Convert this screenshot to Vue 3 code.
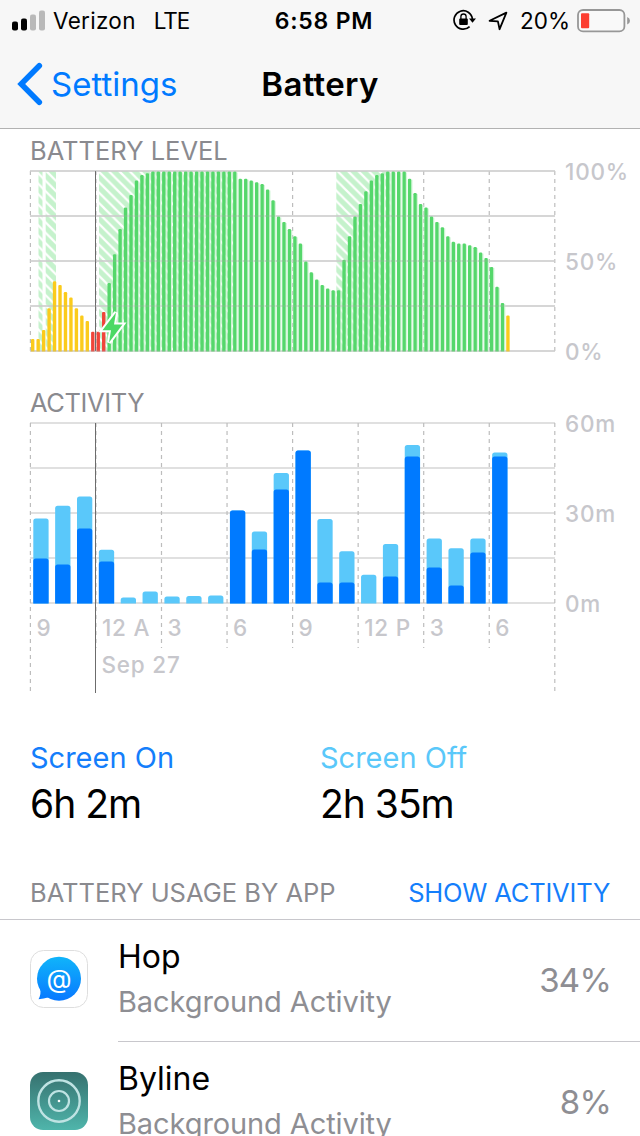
<script setup>
// Battery charge per 15 minutes, in percent
const levels = [
  7, 7, 12, 24, 39, 37, 33, 30, 24, 20, 17, 11, 11, 22, 38, 54, 68, 80, 87, 95, 98, 99,
  100, 100, 100, 100, 100, 100, 100, 100, 100, 100, 100, 100, 100, 100, 100, 100,
  96, 96, 95, 94, 93, 90, 84, 75, 72, 68, 64, 60, 50, 44, 40, 37, 35, 34, 34,
  51, 64, 75, 82, 89, 95, 98, 99, 100, 100, 100, 100, 96, 88, 82, 80, 75, 72, 69,
  64, 61, 60, 60, 59, 58, 55, 52, 47, 36, 27, 20,
]

// Minutes per hour: [screen on, screen on + off]
const activity = [
  [15, 28.3], [13, 32.6], [25, 35.7], [14, 17.9], [0, 2], [0, 4], [0, 2.3], [0, 2.5],
  [0, 2.7], [31, 31], [18, 24], [38, 43.5], [51, 51], [7, 28.2], [7, 17.4], [0, 9.6],
  [9, 19.8], [49, 52.8], [12, 21.7], [6, 18.4], [17, 21.7], [49, 50.3],
]

const LEFT = 30.4
const HOUR = 21.85
const QUARTER = HOUR / 4

function levelColor(i) {
  if (i >= 11 && i <= 13) return '#f0443a'
  if (i < 11 || i === 87) return '#fbcb1b'
  return '#55d76b'
}

const levelBars = levels.map((value, i) => ({
  x: LEFT + 0.6 + i * QUARTER,
  y: 351.5 - value * 1.8,
  h: value * 1.8,
  color: levelColor(i),
  wash: i > 13 && i < 87,
}))

// Periods in which the phone was plugged in
const charging = [
  { x: 38.5, w: 4 },
  { x: 45.7, w: 10.3 },
  { x: 99, w: 134.5 },
  { x: 336.3, w: 54.5 },
]

const gridRows = [0, 45, 90, 135, 180]
const hours = [
  { n: 0, label: '9' },
  { n: 3, label: '12 A' },
  { n: 6, label: '3' },
  { n: 9, label: '6' },
  { n: 12, label: '9' },
  { n: 15, label: '12 P' },
  { n: 18, label: '3' },
  { n: 21, label: '6' },
  { n: 24, label: '' },
].map((h) => ({ ...h, x: LEFT + h.n * HOUR, end: h.n % 24 === 0 ? 693 : 648 }))

// Bar outline with only its top corners rounded
function barPath(x, minutes) {
  const top = 603.5 - minutes * 3
  const r = 2.5
  return `M${x} 603.5V${top + r}q0 ${-r} ${r} ${-r}h${15.3 - 2 * r}q${r} 0 ${r} ${r}V603.5z`
}

const activityBars = activity.map(([on, total], i) => {
  const x = 33.3 + i * HOUR
  return { off: barPath(x, total), on: on ? barPath(x, on) : null }
})

const apps = [
  { name: 'Hop', detail: 'Background Activity', usage: '34%', icon: 'hop' },
  { name: 'Byline', detail: 'Background Activity', usage: '8%', icon: 'byline' },
]
</script>

<template>
  <div class="screen">
    <header class="top">
      <div class="status">
        <div class="status__left">
          <svg class="signal" width="34" height="21" viewBox="0 0 34 21">
            <rect x="0" y="11.5" width="6" height="9" rx="2" />
            <rect x="9" y="8.5" width="6" height="12" rx="2" />
            <rect class="signal--off" x="18" y="4.5" width="6" height="16" rx="2" />
            <rect class="signal--off" x="27" y="0.5" width="6" height="20" rx="2" />
          </svg>
          <span class="carrier">Verizon</span>
          <span class="network">LTE</span>
        </div>
        <div class="clock">6:58 PM</div>
        <div class="status__right">
          <svg class="lock" width="24" height="22" viewBox="0 0 24 22">
            <path d="M16.6 17.6A9.2 9.2 0 1 1 19.4 10" fill="none" stroke="#000" stroke-width="1.7" />
            <path d="M16 9.6h7l-3.5 4.2z" />
            <rect x="6.2" y="9.6" width="8.6" height="6.4" rx="1" />
            <path d="M7.9 10V7.6a2.6 2.6 0 0 1 5.2 0V10" fill="none" stroke="#000" stroke-width="1.3" />
          </svg>
          <svg class="arrow" width="20" height="20" viewBox="0 0 20 20">
            <path d="M1.6 9.8 18.400 1.600 11.600 18.200 9.900 10.400z" />
          </svg>
          <span class="percent">20%</span>
          <svg class="cell" width="54" height="24" viewBox="0 0 54 24">
            <rect x="1" y="1" width="46.4" height="21.4" rx="5" fill="#fff" fill-opacity=".3" stroke="#979797" stroke-width="1.8" />
            <rect x="4" y="4.2" width="8.2" height="15" rx="1" fill="#fc3d30" />
            <path d="M50.2 8q2.8 1.2 2.8 3.8t-2.8 3.8z" fill="#979797" />
          </svg>
        </div>
      </div>
      <nav class="nav">
        <a class="back">
          <svg width="26" height="44" viewBox="0 0 26 44">
            <path d="M22.300 3.700 4.200 22l18.100 18.300" />
          </svg>
          <span>Settings</span>
        </a>
        <h1 class="title">Battery</h1>
      </nav>
    </header>

    <section class="charts">
      <h2 class="caption">BATTERY LEVEL</h2>
      <svg class="chart" width="610" height="222" viewBox="30 166 610 222">
        <defs>
          <pattern id="hatch" width="10.4" height="10.4" patternUnits="userSpaceOnUse">
            <rect width="10.4" height="10.4" fill="#c5f2cc" />
            <path d="M-2-2 12.4 12.4M-2 8.4 2 12.4M8.4-2 12.4 2" stroke="#fff" stroke-width="2.2" />
          </pattern>
        </defs>
        <line v-for="h in hours" :key="h.n" class="dash" :x1="h.x" :x2="h.x" y1="171" y2="351" />
        <rect v-for="c in charging" :key="c.x" :x="c.x" y="171" :width="c.w" height="180" fill="url(#hatch)" />
        <line v-for="g in gridRows" :key="g" class="rule" x1="30" x2="555" :y1="171 + g" :y2="171 + g" />
        <line class="midnight" x1="95.5" x2="95.5" y1="171" y2="351" />
        <g v-for="(b, i) in levelBars" :key="i">
          <rect v-if="b.wash" :x="b.x + 3.4" :y="b.y + 1" width="1.2" :height="b.h - 1" fill="#d5f6da" />
          <path
            :d="`M${b.x} 351.5V${b.y + 1.2}q0-1.2 1.2-1.2h1q1.2 0 1.2 1.2V351.5z`"
            :fill="b.color"
          />
        </g>
        <line v-for="g in gridRows" :key="'o' + g" class="rule rule--over" x1="30" x2="555" :y1="171 + g" :y2="171 + g" />
        <path class="bolt" d="M116 312.500 102.500 330.200h8.500L109 342.500 122.500 324.500h-8.500z" />
        <text class="label" x="565" y="180">100%</text>
        <text class="label" x="565" y="270">50%</text>
        <text class="label" x="565" y="360">0%</text>
      </svg>

      <h2 class="caption caption--tight">ACTIVITY</h2>
      <svg class="chart" width="610" height="321" viewBox="30 418 610 321">
        <line v-for="g in gridRows" :key="g" class="rule" x1="30" x2="555" :y1="423 + g" :y2="423 + g" />
        <line v-for="h in hours" :key="h.n" class="dash" :x1="h.x" :x2="h.x" y1="423" :y2="h.end" />
        <line class="midnight" x1="95.5" x2="95.5" y1="423" y2="693" />
        <g v-for="(b, i) in activityBars" :key="i">
          <path :d="b.off" fill="#5ac8fa" />
          <path v-if="b.on" :d="b.on" fill="#007aff" />
        </g>
        <text v-for="h in hours" :key="'t' + h.n" class="label" :x="h.x + 6" y="636">{{ h.label }}</text>
        <text class="label" x="101.5" y="673">Sep 27</text>
        <text class="label" x="565" y="432">60m</text>
        <text class="label" x="565" y="522">30m</text>
        <text class="label" x="565" y="612">0m</text>
      </svg>
    </section>

    <section class="totals">
      <div>
        <div class="totals__name totals__name--on">Screen On</div>
        <div class="totals__value">6h 2m</div>
      </div>
      <div>
        <div class="totals__name totals__name--off">Screen Off</div>
        <div class="totals__value">2h 35m</div>
      </div>
    </section>

    <div class="usage-head">
      <h2 class="caption">BATTERY USAGE BY APP</h2>
      <a class="toggle">SHOW ACTIVITY</a>
    </div>

    <ul class="apps">
      <li v-for="app in apps" :key="app.name" class="app">
        <svg v-if="app.icon === 'hop'" class="app__icon" width="58" height="58" viewBox="0 0 58 58">
          <defs>
            <linearGradient id="hop" x1="0" y1="7" x2="0" y2="51" gradientUnits="userSpaceOnUse">
              <stop offset="0" stop-color="#10b4fa" />
              <stop offset="1" stop-color="#0878ff" />
            </linearGradient>
          </defs>
          <rect x=".5" y=".5" width="57" height="57" rx="13" fill="#fff" stroke="#dedede" />
          <g fill="url(#hop)">
            <circle cx="29" cy="28.7" r="22" />
            <path d="M10 38q1.500 6-1.500 11.200 5-.7 10.500-2z" />
          </g>
          <text x="29" y="37.5" class="at">@</text>
        </svg>
        <svg v-else class="app__icon" width="58" height="58" viewBox="0 0 58 58">
          <defs>
            <linearGradient id="byline" x1="0" y1="0" x2="0" y2="1">
              <stop offset="0" stop-color="#36716f" />
              <stop offset="1" stop-color="#4fb5ab" />
            </linearGradient>
          </defs>
          <rect width="58" height="58" rx="13" fill="url(#byline)" />
          <g fill="none" stroke="#bfe3e3">
            <circle cx="29" cy="29" r="20.7" stroke-width="2.4" />
            <circle cx="29" cy="29" r="10" stroke-width="2.2" />
          </g>
          <circle cx="29" cy="29" r="1.3" fill="#fff" />
        </svg>
        <div class="app__body">
          <div class="app__text">
            <div class="app__name">{{ app.name }}</div>
            <div class="app__detail">{{ app.detail }}</div>
          </div>
          <div class="app__usage">{{ app.usage }}</div>
        </div>
      </li>
    </ul>
  </div>
</template>

<style>
body {
  margin: 0;
  background: #fff;
}
</style>

<style scoped>
.screen {
  width: 640px;
  height: 1136px;
  overflow: hidden;
  background: #fff;
  color: #000;
  font-family: Inter, "Liberation Sans", sans-serif;
}

.screen svg {
  display: block;
  flex-shrink: 0;
}

.screen .chart {
  overflow: visible;
}

.top {
  height: 128px;
  background: #f7f7f7;
  border-bottom: 1px solid #b2b2b2;
}

.status {
  display: grid;
  grid-template-columns: 1fr auto 1fr;
  align-items: center;
  height: 38px;
  padding: 2px 9px 0 12px;
  font-size: 22.5px;
  line-height: 38px;
}

.status__left,
.status__right {
  display: flex;
  align-items: center;
}

.status__right {
  justify-content: flex-end;
}

.signal {
  margin-bottom: 2px;
}

.signal--off {
  fill: #b9b9b9;
}

.carrier {
  margin-left: 7px;
  letter-spacing: 0.3px;
}

.network {
  margin-left: 18px;
  letter-spacing: -1px;
}

.clock {
  padding-left: 5px;
  font-size: 23px;
  font-weight: 600;
  letter-spacing: 0.8px;
}

.lock {
  margin-bottom: 2px;
}

.arrow {
  margin: 0 12px 0 11px;
}

.arrow path {
  fill: none;
  stroke: #000;
  stroke-width: 1.8;
  stroke-linejoin: round;
}

.cell {
  margin-left: 7px;
}

.nav {
  display: grid;
  grid-template-columns: 1fr auto 1fr;
  align-items: center;
  height: 88px;
  font-size: 33px;
}

.back {
  display: flex;
  align-items: center;
  gap: 8px;
  padding-left: 17px;
  color: #007aff;
}

.back path {
  fill: none;
  stroke: #007aff;
  stroke-width: 5.6;
  stroke-linecap: round;
  stroke-linejoin: miter;
}

.title {
  margin: 0;
  font-size: 33px;
  font-weight: 600;
  letter-spacing: 0.3px;
}

.charts {
  padding: 7px 0 0 30px;
}

.caption {
  margin: 0;
  color: #8a8a8f;
  font-size: 25.5px;
  font-weight: 400;
  line-height: 30px;
}

.caption--tight {
  letter-spacing: -0.4px;
}

.rule {
  stroke: #d6d6d6;
  stroke-width: 1.6;
}

.rule--over {
  opacity: 0.25;
  stroke: #b0b0b0;
}

.dash {
  stroke: #bdbdbd;
  stroke-width: 1.2;
  stroke-dasharray: 4 4;
}

.midnight {
  stroke: #6c6c6c;
  stroke-width: 1;
}

.bolt {
  fill: #4cd964;
  stroke: #fff;
  stroke-width: 4;
  paint-order: stroke;
}

.label {
  fill: #c7c7cc;
  font-size: 22.5px;
  font-weight: 500;
  letter-spacing: 0.8px;
}

.totals {
  display: grid;
  grid-template-columns: 290px 1fr;
  padding: 1px 0 0 30px;
}

.totals__name {
  font-size: 29px;
  line-height: 36px;
}

.totals__name--on {
  color: #147efb;
}

.totals__name--off {
  color: #5ac8fa;
}

.totals__value {
  margin-top: 4px;
  font-size: 39px;
  letter-spacing: -1px;
  line-height: 48px;
}

.usage-head {
  display: flex;
  justify-content: space-between;
  margin-top: 50px;
  padding: 0 30px 11px;
  border-bottom: 1px solid #c8c7cc;
}

.toggle {
  color: #147efb;
  font-size: 25.5px;
  letter-spacing: -0.2px;
  line-height: 30px;
}

.apps {
  margin: 0;
  padding: 0;
  list-style: none;
}

.app {
  display: flex;
  padding-left: 30px;
}

.app__icon {
  margin: 30px 30px 0 0;
}

.at {
  fill: #fff;
  font-size: 26px;
  font-weight: 400;
  text-anchor: middle;
}

.app__body {
  display: flex;
  flex: 1;
  align-items: center;
  justify-content: space-between;
  height: 121px;
  padding-right: 29px;
  border-bottom: 1px solid #c8c7cc;
}

.app__text {
  padding-bottom: 5px;
}

.app__name {
  font-size: 32px;
  line-height: 40px;
}

.app__detail {
  margin-top: 7px;
  color: #8e8e93;
  font-size: 29px;
  letter-spacing: -0.1px;
  line-height: 36px;
}

.app__usage {
  padding-bottom: 2px;
  color: #8e8e93;
  font-size: 33px;
  letter-spacing: -0.8px;
}
</style>
